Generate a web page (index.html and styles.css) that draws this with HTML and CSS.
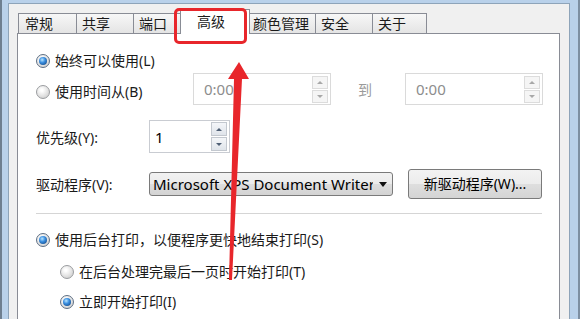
FILE: index.html
```html
<!DOCTYPE html>
<html lang="zh-CN">
<head>
  <meta charset="UTF-8" />
  <title>打印机属性 – 高级</title>
  <link rel="stylesheet" href="styles.css">
</head>
<body>
<div class="window">
  <div class="dialog">
    <div class="tabs">
      <div class="tab tab-general">常规</div>
      <div class="tab tab-share">共享</div>
      <div class="tab tab-port">端口</div>
      <div class="tab tab-advanced active">高级</div>
      <div class="tab tab-color">颜色管理</div>
      <div class="tab tab-security">安全</div>
      <div class="tab tab-about">关于</div>
    </div>

    <div class="panel">
      <div class="opt">
        <span class="radio on"></span><span>始终可以使用(L)</span>
      </div>

      <div class="row time-row">
        <div class="opt time-opt">
          <span class="radio"></span><span>使用时间从(B)</span>
        </div>
        <div class="field time-field">
          <span class="val">0:00</span>
          <div class="spin">
            <span class="spin-btn"><i class="up"></i></span>
            <span class="spin-btn"><i class="down"></i></span>
          </div>
        </div>
        <span class="to">到</span>
        <div class="field time-field">
          <span class="val">0:00</span>
          <div class="spin">
            <span class="spin-btn"><i class="up"></i></span>
            <span class="spin-btn"><i class="down"></i></span>
          </div>
        </div>
      </div>

      <div class="row priority-row">
        <span class="label">优先级(Y):</span>
        <div class="field prio-field">
          <span class="val">1</span>
          <div class="spin">
            <span class="spin-btn"><i class="up"></i></span>
            <span class="spin-btn"><i class="down"></i></span>
          </div>
        </div>
      </div>

      <div class="row driver-row">
        <span class="label">驱动程序(V):</span>
        <div class="select">
          <span class="select-text">Microsoft XPS Document Writer</span>
          <span class="caret"></span>
        </div>
        <div class="button">新驱动程序(W)...</div>
      </div>

      <div class="sep"></div>

      <div class="opt spool">
        <span class="radio on"></span><span>使用后台打印，以便程序更快地结束打印(S)</span>
      </div>
      <div class="opt sub sub-first">
        <span class="radio"></span><span>在后台处理完最后一页时开始打印(T)</span>
      </div>
      <div class="opt sub sub-second">
        <span class="radio on"></span><span>立即开始打印(I)</span>
      </div>
    </div>
  </div>
</div>

<!-- red annotation -->
<div class="mark-box"></div>
<svg class="mark-arrow" width="580" height="319" viewBox="0 0 580 319">
  <polygon points="239,62 249,79 242,79 232,280 229,280 234,79 228,79" fill="#e8262b"/>
</svg>
</body>
</html>
```

FILE: styles.css
```css
body {
  margin: 0;
  height: 319px;
  overflow: hidden;
  background: #dfe8f2;
  font-family: "Noto Sans", "Noto Sans CJK SC", sans-serif;
  font-size: 14px;
  color: #1a1a1a;
  position: relative;
}

.window {
  height: 100%;
  box-sizing: border-box;
  padding: 3px 8px 0 6px;
  background: #b9d1ea;
  border-left: 2px solid #6e7f90;
  border-right: 2px solid #7d8fa2;
}

.dialog {
  height: 100%;
  box-sizing: border-box;
  background: #f0f0f0;
  border: 1px solid #8ea4b9;
  border-bottom: none;
  padding: 5px 9px 0 8px;
}

/* tabs */
.tabs {
  display: flex;
  align-items: flex-end;
  height: 24px;
  padding-left: 1px;
}

.tab {
  box-sizing: border-box;
  height: 20px;
  margin-left: -1px;
  padding-left: 5px;
  line-height: 19px;
  border: 1px solid #898c95;
  border-bottom: none;
  background: linear-gradient(#f7f7f7, #e4e4e4);
  white-space: nowrap;
}
.tab:first-child { margin-left: 0; }

.tab-general { width: 59px; padding-left: 6px; }
.tab-share { width: 58px; }
.tab-port { width: 48px; }
.tab-advanced { width: 70px; }
.tab-color { width: 67px; padding-left: 3px; }
.tab-security { width: 58px; }
.tab-about { width: 55px; }

.tab.active {
  height: 25px;
  margin-bottom: -1px;
  padding-left: 16px;
  line-height: 24px;
  background: #fff;
  position: relative;
  z-index: 1;
}

/* page */
.panel {
  height: 300px;
  box-sizing: border-box;
  background: #fff;
  border: 1px solid #898c95;
  padding: 16px 16px 0 18px;
}

.opt {
  display: flex;
  align-items: center;
  gap: 5px;
  height: 22px;
  line-height: 20px;
  white-space: nowrap;
}

.radio {
  position: relative;
  width: 14px;
  height: 14px;
  box-sizing: border-box;
  border-radius: 50%;
  border: 1px solid #9a9c9f;
  background: radial-gradient(circle at 40% 35%, #ffffff 10%, #e2e2e2 55%, #c4c4c4 100%);
  flex: none;
}
.radio.on {
  border-color: #5e6f84;
}
.radio.on::after {
  content: "";
  position: absolute;
  left: 2px;
  top: 2px;
  width: 8px;
  height: 8px;
  border-radius: 50%;
  background: radial-gradient(circle at 40% 35%, #b8e6ff 0, #3a8ee0 40%, #0b3a73 100%);
}

.row {
  display: flex;
  align-items: center;
}

.time-row {
  margin-top: 1px;
  height: 32px;
}
.time-opt {
  width: 157px;
  padding-top: 6px;
}

.label {
  width: 113px;
  flex: none;
  white-space: nowrap;
}

.field {
  display: flex;
  align-items: center;
  box-sizing: border-box;
  background: #fff;
  border: 1px solid #dadada;
  padding: 2px 2px 2px 10px;
}
.field .val {
  flex: 1;
  font-size: 15px;
}

.time-field {
  width: 138px;
  height: 32px;
  color: #8d8d8d;
}

.to {
  width: 47px;
  margin-left: 27px;
  color: #9a9a9a;
}

.spin {
  display: flex;
  flex-direction: column;
  gap: 1px;
  width: 16px;
}
.spin-btn {
  display: flex;
  align-items: center;
  justify-content: center;
  height: 13px;
  box-sizing: border-box;
  border: 1px solid #dcdcdc;
  background: #f5f5f5;
}
.spin-btn i {
  width: 0;
  height: 0;
  border-left: 3px solid transparent;
  border-right: 3px solid transparent;
}
.spin-btn i.up { border-bottom: 3px solid #a8a8a8; }
.spin-btn i.down { border-top: 3px solid #a8a8a8; }

.priority-row {
  margin-top: 15px;
  height: 33px;
}
.prio-field {
  width: 81px;
  height: 33px;
  border-color: #c9ccd2;
  padding-left: 5px;
  color: #000;
}
.prio-field .spin-btn {
  height: 14px;
  border-color: #c3c8cf;
  background: linear-gradient(#f4f6f9, #dfe4ea);
}
.prio-field .spin-btn i.up { border-bottom-color: #4e5f75; }
.prio-field .spin-btn i.down { border-top-color: #4e5f75; }

.driver-row {
  margin-top: 16px;
  height: 30px;
}

.select {
  display: flex;
  align-items: center;
  width: 244px;
  height: 24px;
  box-sizing: border-box;
  border: 1px solid #7a7a7a;
  border-radius: 3px;
  background: linear-gradient(#f2f2f2 0, #ebebeb 50%, #dddddd 51%, #d3d3d3 100%);
  padding-left: 3px;
  color: #000;
}
.select-text {
  flex: 1;
  overflow: hidden;
  white-space: nowrap;
  font-size: 15px;
  line-height: 20px;
}
.caret {
  width: 19px;
  display: flex;
  justify-content: center;
}
.caret::before {
  content: "";
  border-left: 4px solid transparent;
  border-right: 4px solid transparent;
  border-top: 5px solid #111;
}

.button {
  width: 134px;
  height: 30px;
  margin-left: 15px;
  box-sizing: border-box;
  border: 1px solid #7a7a7a;
  border-radius: 3px;
  background: linear-gradient(#f3f3f3 0, #ececec 50%, #dedede 51%, #d4d4d4 100%);
  text-align: center;
  line-height: 28px;
  color: #000;
  white-space: nowrap;
}

.sep {
  margin-top: 14px;
  width: 506px;
  height: 1px;
  background: #d5d5d5;
}

.spool { margin-top: 15px; }
.sub { padding-left: 24px; }
.sub-first { margin-top: 10px; }
.sub-second { margin-top: 8px; }

/* annotation overlay */
.mark-box {
  position: absolute;
  left: 174px;
  top: 8px;
  width: 73px;
  height: 36px;
  box-sizing: border-box;
  border: 3px solid #e8262b;
  border-radius: 5px;
  z-index: 5;
}
.mark-arrow {
  position: absolute;
  left: 0;
  top: 0;
  z-index: 5;
  pointer-events: none;
}
```
